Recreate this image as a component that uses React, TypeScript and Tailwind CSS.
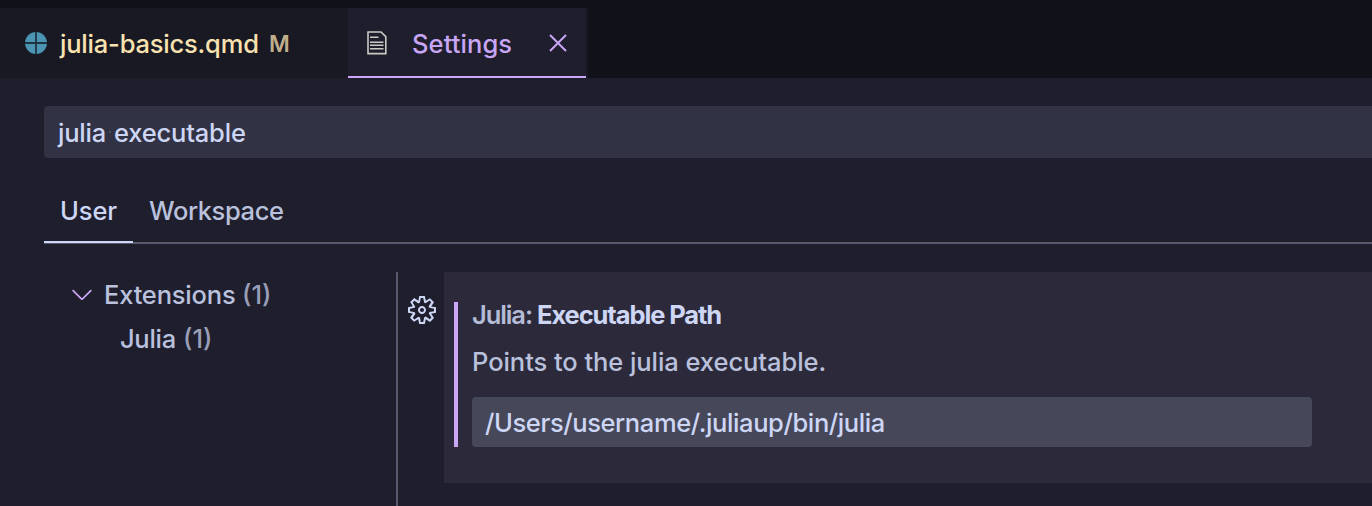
import { VscChevronDown, VscClose, VscGear } from "react-icons/vsc";

function QuartoIcon() {
  return (
    <svg className="h-[22px] w-[22px] shrink-0" viewBox="0 0 22 22">
      <circle cx="11" cy="11" r="11" fill="#4b94b2" />
      <path d="M11 0V22M0 11H22" stroke="#1d3443" strokeWidth="1.8" />
    </svg>
  );
}

function FileIcon() {
  return (
    <svg className="h-6 w-5 shrink-0" viewBox="0 0 20 24" fill="none" stroke="#c9cac4" strokeWidth="1.6">
      <path d="M1 1H14L18.8 5.6V22.6H1Z" />
      <path d="M3 6.2H11.5M3 11.2H16.5M3 14.3H16.5M3 17.8H16.5" />
    </svg>
  );
}

function Tabs() {
  return (
    <div className="flex h-[78px] bg-[#11111a] pt-2">
      <div className="flex w-[348px] items-center bg-[#191923] pl-[25px]">
        <QuartoIcon />
        <span className="ml-[13px] w-[209px] pt-0.5 tracking-[-0.2px] text-[#f8e2b0]">julia-basics.qmd</span>
        <span className="pt-0.5 text-[22.5px] font-semibold text-[#c1ae8b]">M</span>
      </div>
      <div className="flex w-[238px] items-center border-b-2 border-[#cba6f7] bg-[#1f1e2d] pl-[19px] pt-0.5 text-[#c9a6f5]">
        <FileIcon />
        <span className="ml-[25px] w-[130px] pt-0.5 tracking-[0.1px]">Settings</span>
        <VscClose className="h-8 w-8 shrink-0" />
      </div>
      <div className="w-0.5 bg-[#181822]" />
    </div>
  );
}

export default function App() {
  return (
    <div className="flex h-[506px] w-[1372px] flex-col overflow-hidden whitespace-nowrap bg-[#1f1e2d] font-['Inter',sans-serif] text-[25.5px] font-[450] leading-[44px] text-[#b9c1dd]">
      <Tabs />
      <div className="ml-11 mt-7 flex h-[52px] items-center rounded-l-[4px] bg-[#313243] pl-[14px] tracking-[-0.2px] text-[#cdd6f4]">
        <span className="pt-0.5">julia</span>
        <span className="mx-[3px] h-0.5 w-0.5 bg-[#4b4d60]" />
        <span className="pt-0.5">executable</span>
      </div>
      <div className="ml-11 mt-[31px] flex h-[55px] shrink-0 border-b-2 border-[#585b70]">
        <div className="-mb-0.5 h-[54px] w-[89px] border-b-2 border-[#cdd6f4] pl-4 tracking-[-0.1px] text-[#cdd6f4]">User</div>
        <div className="ml-4 tracking-[-0.4px]">Workspace</div>
      </div>
      <div className="mt-7 flex min-h-0 flex-1">
        <div className="w-[396px] shrink-0 pl-[66px] pt-[1px]">
          <div className="flex items-center">
            <VscChevronDown className="-mt-0.5 mr-1.5 h-8 w-8 text-[#cba6f7]" />
            <span className="w-[138px] tracking-[-0.2px]">Extensions</span>
            <span className="text-[#989eb7]">(1)</span>
          </div>
          <div className="flex pl-[54px]">
            <span className="w-[63px] tracking-[-0.3px]">Julia</span>
            <span className="text-[#989eb7]">(1)</span>
          </div>
        </div>
        <div className="w-0.5 shrink-0 bg-[#585b70]" />
        <div className="w-[46px] shrink-0 pl-2 pt-[22px]">
          <VscGear className="h-8 w-8 text-[#cdd6f4]" />
        </div>
        <div className="h-[211px] flex-1 bg-[#2c2a3a] pl-2.5 pt-[30px]">
          <div className="h-[145px] border-l-4 border-[#cba6f7] pl-[14px]">
            <div className="flex h-[26px] items-center font-semibold tracking-[-1.1px]">
              <span className="w-[65px] text-[#b4bbd7]">Julia:</span>
              <span className="font-bold text-[#cdd6f4]">Executable Path</span>
            </div>
            <div className="mt-3 tracking-[-0.06px]">Points to the julia executable.</div>
            <div className="mt-[13px] flex h-[50px] w-[840px] items-center rounded-[4px] bg-[#46485a] pl-[13px] pt-0.5 tracking-[-0.4px] text-[#cdd6f4]">
              /Users/username/.juliaup/bin/julia
            </div>
          </div>
        </div>
      </div>
    </div>
  );
}
